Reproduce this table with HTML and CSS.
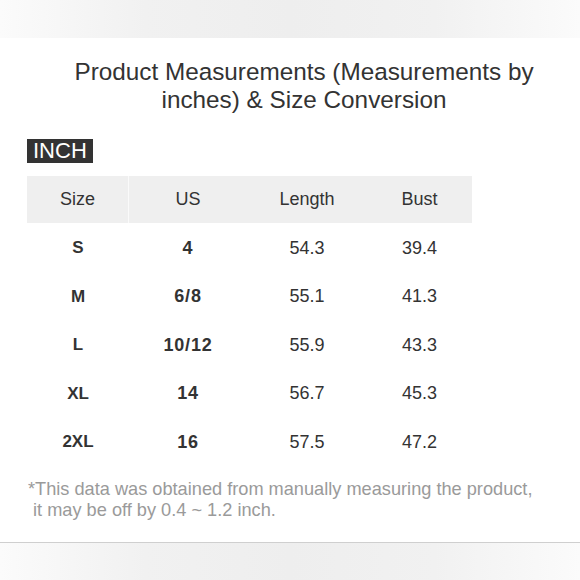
FILE: index.html
```html
<!DOCTYPE html>
<html>
<head>
<meta charset="utf-8">
<link rel="stylesheet" href="styles.css">
</head>
<body>
<div class="page">
  <div class="band top"></div>
  <main class="content">
    <h1 class="title">Product Measurements (Measurements by inches) &amp; Size Conversion</h1>
    <div class="unit"><span class="tag">INCH</span></div>
    <div class="table">
      <div class="row head">
        <div class="cell first">Size</div><div class="cell">US</div><div class="cell">Length</div><div class="cell">Bust</div>
      </div>
      <div class="row"><div class="cell b">S</div><div class="cell b us">4</div><div class="cell">54.3</div><div class="cell">39.4</div></div>
      <div class="row"><div class="cell b">M</div><div class="cell b us">6/8</div><div class="cell">55.1</div><div class="cell">41.3</div></div>
      <div class="row"><div class="cell b">L</div><div class="cell b us">10/12</div><div class="cell">55.9</div><div class="cell">43.3</div></div>
      <div class="row"><div class="cell b">XL</div><div class="cell b us">14</div><div class="cell">56.7</div><div class="cell">45.3</div></div>
      <div class="row"><div class="cell b">2XL</div><div class="cell b us">16</div><div class="cell">57.5</div><div class="cell">47.2</div></div>
    </div>
    <p class="note">*This data was obtained from manually measuring the product,<br>&nbsp;it may be off by 0.4 ~ 1.2 inch.</p>
  </main>
  <div class="band bottom"></div>
</div>
</body>
</html>
```
FILE: styles.css
```css
html, body {
  margin: 0;
  padding: 0;
  background: #fff;
}
.page {
  width: 580px;
  height: 580px;
  overflow: hidden;
  display: flex;
  flex-direction: column;
  font-family: "Liberation Sans", Arial, sans-serif;
  color: #333;
}
.band {
  flex: none;
  background: linear-gradient(to right, #fbfbfb 0%, #f1f1f1 25%, #eeeeee 50%, #f1f1f1 75%, #fbfbfb 100%);
}
.band.top {
  height: 38px;
}
.band.bottom {
  flex: 1;
  border-top: 1px solid #cfcfcf;
}
.content {
  height: 504px;
  display: flex;
  flex-direction: column;
}
.title {
  margin: 20px 0 0;
  padding: 0 40px 0 68px;
  font-size: 24.3px;
  line-height: 28px;
  font-weight: normal;
  text-align: center;
  color: #333;
}
.unit {
  margin-top: 25px;
  padding-left: 27px;
  display: flex;
}
.tag {
  background: #333;
  color: #fff;
  font-size: 22px;
  line-height: 24px;
  padding: 0 6px;
  height: 24px;
}
.table {
  margin: 13px 0 0 27px;
  width: 445px;
}
.row {
  display: grid;
  grid-template-columns: 102px 118px 120px 105px;
  height: 48.5px;
  align-items: center;
  font-size: 18px;
}
.row.head {
  height: 47px;
  background: #efefef;
  align-items: stretch;
  margin-bottom: 1px;
}
.row.head .cell {
  display: flex;
  align-items: center;
  justify-content: center;
}
.row.head .cell.first {
  border-right: 1px solid #fafafa;
}
.cell {
  text-align: center;
}
.cell.b {
  font-weight: bold;
  font-size: 17px;
}
.cell.us {
  font-size: 18px;
  letter-spacing: 0.8px;
}
.note {
  margin: 12px 0 0 28px;
  font-size: 18.2px;
  line-height: 21px;
  color: #9a9a9a;
}
```
